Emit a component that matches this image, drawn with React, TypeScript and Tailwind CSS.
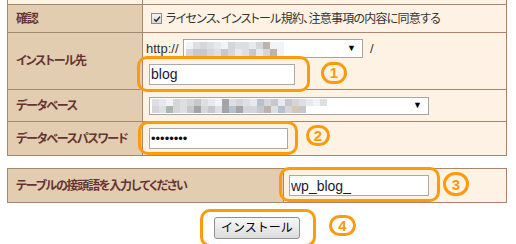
import React from "react";

const BORDER = "border-[#a8866b]";

// palette for the blurred (mosaic) select contents
const P = [
  "bg-[#e8e9ee]",
  "bg-[#d6d6da]",
  "bg-[#c7c7cc]",
  "bg-[#dedfe3]",
  "bg-[#bdb3ab]",
  "bg-[#f2f3f7]",
  "bg-[#b7c1cd]",
  "bg-[#a9b7ae]",
  "bg-[#d7c8b2]",
  "bg-[#a4a4a8]",
];

const Mosaic = ({ top, bottom }: { top: string; bottom: string }) => (
  <div className="flex flex-col">
    {[top, bottom].map((row, r) => (
      <div key={r} className="flex">
        {row.split("").map((c, i) => (
          <div key={i} className={`w-[7px] h-[7px] ${P[Number(c)]}`} />
        ))}
      </div>
    ))}
  </div>
);

const FakeSelect = ({
  width,
  height,
  top,
  bottom,
}: {
  width: string;
  height: string;
  top: string;
  bottom: string;
}) => (
  <div className={`${width} ${height} border border-[#a5a5a5] bg-white flex items-center pl-[2px] pr-[6px]`}>
    <Mosaic top={top} bottom={bottom} />
    <span className="ml-auto text-[9px] leading-none text-black">▼</span>
  </div>
);

const Circled = ({ n, className }: { n: string; className: string }) => (
  <div
    className={`absolute rounded-full border-[3px] border-[#ff9a0a] flex items-center justify-center text-[#ff9a0a] font-bold text-[15px] leading-none ${className}`}
  >
    {n}
  </div>
);

const Label = ({ children, width }: { children: React.ReactNode; width: string }) => (
  <div className={`${width} shrink-0 border-r ${BORDER} bg-[#e3cdb1] pl-[8px] flex items-center font-bold text-[12px] tracking-[-1.2px] text-[#663333]`}>
    {children}
  </div>
);

export default function App() {
  return (
    <div className="w-[516px] h-[244px] overflow-hidden bg-white text-[12px] text-[#333] font-['Liberation_Sans','Noto_Sans_CJK_JP',sans-serif] [font-feature-settings:'palt']">
      {/* main table */}
      <div className={`ml-[7px] w-[500px] border-x ${BORDER}`}>
        <div className={`flex h-[5px] border-b ${BORDER}`}>
          <div className={`w-[135px] border-r ${BORDER} bg-[#fef2e4]`} />
          <div className="flex-1 bg-[#fef2e4]" />
        </div>

        <div className={`flex h-[28px] border-b ${BORDER}`}>
          <Label width="w-[135px]">確認</Label>
          <div className="flex-1 bg-[#fef2e4] flex items-center pl-[8px]">
            <div className="w-[11px] h-[11px] border border-[#8a8a8a] bg-gradient-to-b from-[#f4f4f4] to-[#d8d8d8] flex items-center justify-center">
              <svg viewBox="0 0 10 10" className="w-[8px] h-[8px]">
                <path d="M1.5 5.2 L4 7.8 L8.8 2" fill="none" stroke="#222" strokeWidth="1.8" />
              </svg>
            </div>
            <span className="ml-[4px] tracking-[-0.75px]">ライセンス、インストール規約、注意事項の内容に同意する</span>
          </div>
        </div>

        <div className={`flex h-[57px] border-b ${BORDER}`}>
          <Label width="w-[135px]">インストール先</Label>
          <div className="flex-1 bg-[#fef2e4] flex flex-col pl-[3px] pt-[6px]">
            <div className="flex items-center">
              <span className="w-[37px] text-[13px]">http://</span>
              <FakeSelect width="w-[180px]" height="h-[19px]" top="53130513301455" bottom="12213210320145" />
              <span className="ml-[7px] text-[13px]">/</span>
            </div>
            <div className="relative ml-[3px] mt-[5px] w-[146px] h-[21px]">
              <input
                readOnly
                value="blog"
                className="w-full h-full border border-[#a9a9a9] bg-white px-[1px] text-[14px] text-[#1a1a33] outline-none"
              />
              <div className="absolute -left-[12px] -top-[8px] w-[173px] h-[36px] rounded-[10px] border-[3px] border-[#ff9a0a]" />
              <Circled n="1" className="left-[172px] -top-[2px] w-[26px] h-[22px]" />
            </div>
          </div>
        </div>

        <div className={`flex h-[32px] border-b ${BORDER}`}>
          <Label width="w-[135px]">データベース</Label>
          <div className="flex-1 bg-[#fef2e4] flex items-center pl-[6px]">
            <FakeSelect
              width="w-[280px]"
              height="h-[18px]"
              top="3051312305931306120213053"
              bottom="1371329123969112436182"
            />
          </div>
        </div>

        <div className={`flex h-[34px] border-b ${BORDER}`}>
          <Label width="w-[135px]">データベースパスワード</Label>
          <div className="flex-1 bg-[#fef2e4] flex items-center pl-[6px]">
            <div className="relative w-[139px] h-[21px]">
              <input
                readOnly
                type="password"
                value="12345678"
                className="w-full h-full border border-[#a9a9a9] bg-white px-[1px] text-[13px] text-[#111] outline-none"
              />
              <div className="absolute -left-[11px] -top-[7px] w-[160px] h-[34px] rounded-[10px] border-[3px] border-[#ff9a0a]" />
              <Circled n="2" className="left-[157px] -top-[3px] w-[24px] h-[21px]" />
            </div>
          </div>
        </div>
      </div>

      {/* prefix table */}
      <div className={`ml-[7px] mt-[12px] w-[500px] h-[35px] border ${BORDER} flex`}>
        <Label width="w-[276px]">テーブルの接頭語を入力してください</Label>
        <div className="flex-1 bg-[#fef2e4] flex items-center pl-[5px]">
          <div className="relative w-[140px] h-[21px]">
            <input
              readOnly
              value="wp_blog_"
              className="w-full h-full border border-[#a9a9a9] bg-white px-[1px] text-[14px] text-[#1a1a33] outline-none"
            />
            <div className="absolute -left-[10px] -top-[8px] w-[161px] h-[35px] rounded-[10px] border-[3px] border-[#ff9a0a]" />
            <Circled n="3" className="left-[154px] -top-[3px] w-[26px] h-[24px]" />
          </div>
        </div>
      </div>

      {/* submit */}
      <div className="ml-[7px] mt-[14px] w-[500px] flex justify-center">
        <div className="relative w-[86px] h-[22px]">
          <button className="w-full h-full border border-[#8f8f8f] rounded-[3px] bg-gradient-to-b from-[#f7f7f7] to-[#dcdcdc] text-[12px] text-black [font-feature-settings:normal]">
            インストール
          </button>
          <div className="absolute -left-[14px] -top-[8px] w-[116px] h-[38px] rounded-[10px] border-[3px] border-[#ff9a0a]" />
          <Circled n="4" className="left-[115px] -top-[2px] w-[27px] h-[21px]" />
        </div>
      </div>
    </div>
  );
}
